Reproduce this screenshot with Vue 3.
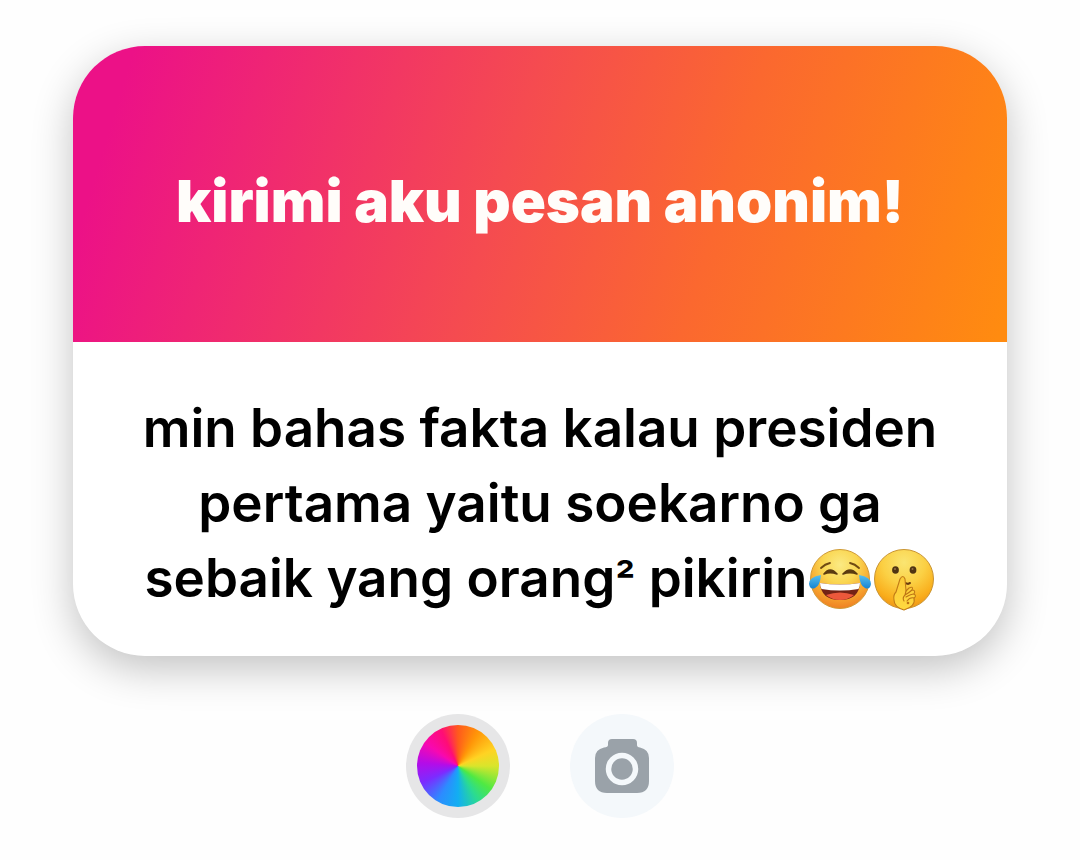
<script setup>
const prompt = 'kirimi aku pesan anonim!'
const lines = ['min bahas fakta kalau presiden', 'pertama yaitu soekarno ga']
</script>

<template>
  <main class="page">
    <article class="card">
      <header class="card-head">
        <h1>{{ prompt }}</h1>
      </header>
      <p class="message">
        <span v-for="line in lines" :key="line" class="line">{{ line }}</span>
        <span class="line">
          <span>sebaik yang orang<span class="power">²</span> pikirin</span>
          <svg class="emoji" viewBox="0 0 64 64" role="img" aria-label="face with tears of joy">
            <defs>
              <radialGradient id="joy-face" cx="50%" cy="26%" r="76%">
                <stop offset="0" stop-color="#fbea84" />
                <stop offset=".4" stop-color="#fad651" />
                <stop offset=".72" stop-color="#f7a62e" />
                <stop offset="1" stop-color="#ee7c22" />
              </radialGradient>
              <linearGradient id="joy-tear" x1="0" y1="0" x2="0" y2="1">
                <stop offset="0" stop-color="#58c0ee" />
                <stop offset="1" stop-color="#1784d2" />
              </linearGradient>
            </defs>
            <circle cx="32" cy="32" r="29.5" fill="url(#joy-face)" stroke="#cf9a35" stroke-width="1" />
            <path d="M13 21Q17 17 22 16M42 16Q47 17 51 21" fill="none" stroke="#704a12" stroke-width="1.8" stroke-linecap="round" />
            <path d="M16 27Q22 19 29 27Q22 24.500 16 27ZM35 27Q42 19 49 27Q42 24.500 35 27Z" fill="#5b3b10" stroke="#5b3b10" stroke-width="1.6" stroke-linejoin="round" />
            <path d="M12 36Q32 39 52 36Q51 53 32 53Q13 53 12 36Z" fill="#742315" />
            <path d="M12 36Q32 39 52 36Q52 39 50.500 42Q32 45 13.500 42Q12 39 12 36Z" fill="#fff" />
            <path d="M18 48Q32 43 46 48Q40 53 32 53Q24 53 18 48Z" fill="#ec583b" />
            <path d="M13 28Q1 30 1 37Q2 43 7 41Q12 39 13 28ZM51 28Q63 30 63 37Q62 43 57 41Q52 39 51 28Z" fill="url(#joy-tear)" />
          </svg>
          <svg class="emoji" viewBox="0 0 64 64" role="img" aria-label="shushing face">
            <defs>
              <radialGradient id="shush-face" cx="50%" cy="22%" r="80%">
                <stop offset="0" stop-color="#fae572" />
                <stop offset=".45" stop-color="#fbd044" />
                <stop offset=".8" stop-color="#f9ae1c" />
                <stop offset="1" stop-color="#ee9214" />
              </radialGradient>
              <linearGradient id="shush-hand" x1="0" y1="0" x2="0" y2="1">
                <stop offset="0" stop-color="#fbc936" />
                <stop offset="1" stop-color="#ffd940" />
              </linearGradient>
            </defs>
            <circle cx="32" cy="32" r="29.5" fill="url(#shush-face)" stroke="#c99432" stroke-width="1" />
            <ellipse cx="23.5" cy="23" rx="3.4" ry="3.8" fill="#4f3412" />
            <ellipse cx="41" cy="23" rx="3.4" ry="3.8" fill="#4f3412" />
            <circle cx="23" cy="22" r="1" fill="#967049" />
            <circle cx="40.5" cy="22" r="1" fill="#967049" />
            <path d="M33 36L36 37L38 36" fill="none" stroke="#6b3d10" stroke-width="2" stroke-linecap="round" />
            <path d="M28 32Q31 27 33 32L34 44L37 41Q42 39 40 43Q44 43 42 47Q45 49 42 51Q44 59 32 63Q22 60 22 53Q21 48 24 45Z" fill="url(#shush-hand)" stroke="#c17b17" stroke-width="1.1" stroke-linejoin="round" />
            <path d="M34 44L33 48Q38 45 40 43M34 50Q39 47 42 47M35 54Q38 50 42 51M33 48Q30 51 32 54" fill="none" stroke="#bd7415" stroke-width="1.1" stroke-linecap="round" />
            <circle cx="36" cy="56" r="1.3" fill="#bd7415" />
          </svg>
        </span>
      </p>
    </article>

    <nav class="tools" aria-label="Background">
      <button class="tool tool-color" type="button" aria-label="Color">
        <span class="wheel"></span>
      </button>
      <button class="tool tool-camera" type="button" aria-label="Camera">
        <svg class="camera" viewBox="0 0 54 56" aria-hidden="true">
          <path d="M17 1H38Q42 1 42 5V7Q42 9 45 9.500Q54 11.500 54 20V43Q54 55 42 55H12Q0 55 0 43V20Q0 11.500 9 9.500Q13 9 13 7V5Q13 1 17 1Z" fill="#9aa2a9" />
          <circle cx="27" cy="31" r="13.5" fill="none" stroke="#f4f8fb" stroke-width="5.5" />
        </svg>
      </button>
    </nav>
  </main>
</template>

<style>
body {
  margin: 0;
  background: #fefefe;
}
</style>

<style scoped>
.page {
  box-sizing: border-box;
  min-height: 100vh;
  padding: 46px 73px 40px;
  font-family: Inter, "Liberation Sans", sans-serif;
}

.card {
  overflow: hidden;
  border-radius: 72px;
  background: #fff;
  box-shadow: 0 13px 42px rgba(0, 0, 0, 0.24);
}

.card-head {
  padding: 115px 24px 101px;
  background: linear-gradient(107deg, #ec1187 6%, #f54b50 46%, #fb682f 68%, #ff8b10 99%);
  text-align: center;
}

h1 {
  margin: 0;
  color: #fffdfa;
  font-size: 58px;
  font-weight: 900;
  line-height: 80px;
}

.message {
  margin: 0;
  padding: 49px 24px 40px;
  color: #000;
  font-size: 53px;
  font-weight: 600;
  line-height: 75px;
  text-align: center;
}

.line {
  display: flex;
  justify-content: center;
  align-items: center;
  white-space: nowrap;
}

.power {
  font-size: 44px;
  line-height: 1;
}

.emoji {
  flex: none;
  width: 64px;
  height: 64px;
}

.tools {
  display: flex;
  justify-content: center;
  gap: 60px;
  margin-top: 58px;
}

.tool {
  display: grid;
  place-items: center;
  width: 104px;
  height: 104px;
  padding: 0;
  border: 0;
  border-radius: 50%;
  cursor: pointer;
}

.tool-color {
  background: #e6e6e7;
}

.tool-camera {
  background: #f4f8fb;
}

.wheel {
  width: 82px;
  height: 82px;
  border-radius: 50%;
  background: conic-gradient(#ff5a1c, #ff9508 30deg, #ffd323 65deg, #d9e52b 90deg, #4fe943 125deg, #2bdb91 150deg, #12aef2 180deg, #2c8cff 210deg, #7c2bff 245deg, #b40ce8 275deg, #f808b0 305deg, #ff0d75 335deg, #ff5a1c);
}

.camera {
  width: 54px;
  height: 56px;
}
</style>
